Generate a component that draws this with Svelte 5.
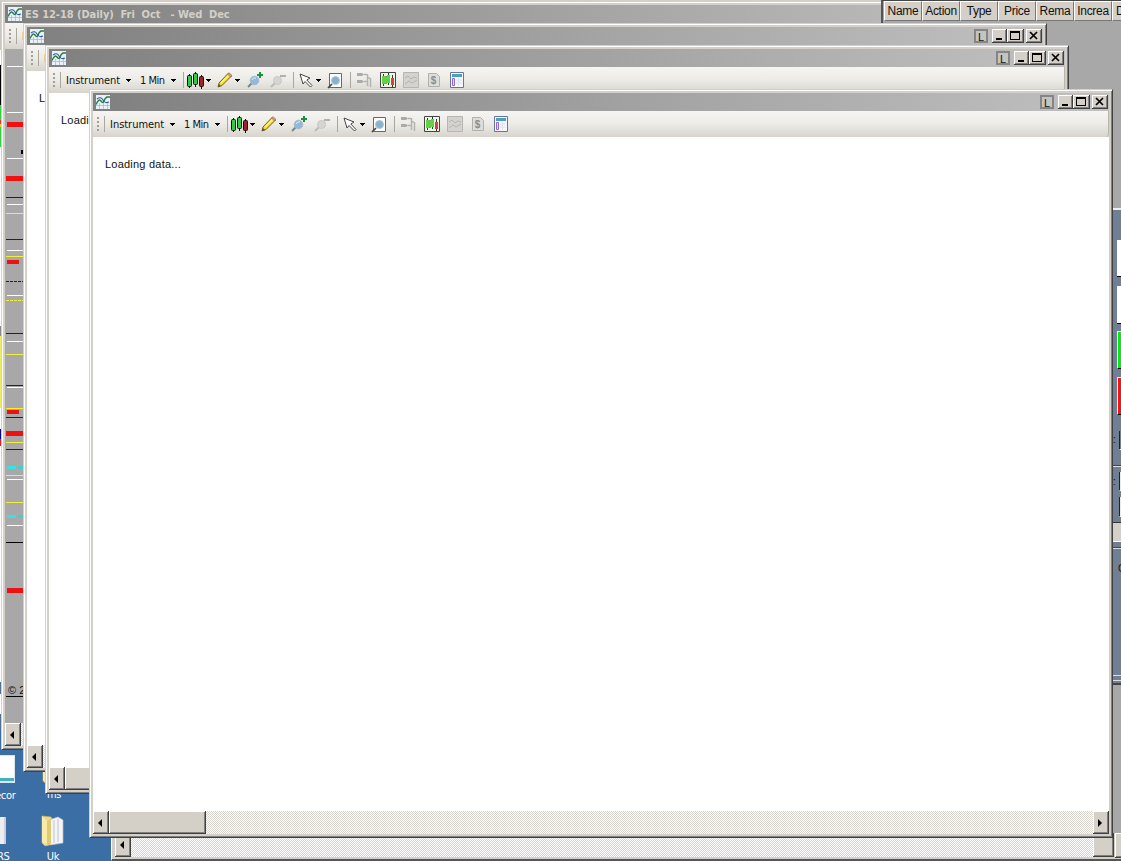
<script>
  const windows = [
    { id: 'daily', x: 1, y: 1, title: 'ES 12-18 (Daily)  Fri  Oct   - Wed  Dec', chart: true, thumb: false },
    { id: 'second', x: 23, y: 23, title: '', chart: false, thumb: false },
    { id: 'third', x: 45, y: 45, title: '', chart: false, thumb: true },
    { id: 'front', x: 89, y: 89, title: '', chart: false, thumb: true }
  ];

  const columns = ['Name', 'Action', 'Type', 'Price', 'Rema', 'Increa', 'D'];

  // price levels: [y, colour, height, left, width]
  const levels = [
    [66, 'white'], [112, 'white'], [122, 'red', 5, 2], [150, 'black', 4, 16, 3],
    [158, 'white'], [176, 'red', 5, 1], [197, 'blue'], [204, 'white'],
    [213, 'yellow'], [239, 'blue'], [250, 'white'], [256, 'yellow'],
    [260, 'red', 4, 2, 12], [281, 'blue dashed'], [295, 'white'], [300, 'yellow dashed'],
    [333, 'blue'], [341, 'white'], [354, 'yellow'], [385, 'blue'], [387, 'white'],
    [408, 'yellow'], [410, 'red', 4, 2, 12], [417, 'blue'], [431, 'red', 5, 1],
    [442, 'yellow'], [449, 'blue'], [466, 'cyan', 3, 2, 9], [466, 'teal', 3, 13, 5],
    [475, 'yellow'], [479, 'white'], [502, 'yellow'], [515, 'cyan', 3, 2, 9],
    [515, 'teal', 3, 13, 5], [525, 'white'], [542, 'black'], [588, 'red', 5, 2], [696, 'black']
  ];
</script>

{#snippet arrow()}
  <svg class="arrow" width="6" height="3" viewBox="0 0 6 3" shape-rendering="crispEdges"><path d="M0 0h5v1H0zM1 1h3v1H1zM2 2h1v1H2z" /></svg>
{/snippet}

{#snippet toolbar()}
  <div class="toolbar">
    <i class="grip"></i>
    <i class="sep first"></i>
    <span class="label instrument">Instrument</span>
    {@render arrow()}
    <span class="label interval">1 Min</span>
    {@render arrow()}
    <i class="sep after-interval"></i>
    <svg class="candles" width="17" height="17" viewBox="0 0 17 17" stroke="#111">
      <path d="M2.5 2v14M8.5 0v15M14.5 3v14" />
      <rect x=".5" y="3.5" width="4" height="11" rx="1" fill="#35c948" />
      <rect x="6.5" y="1.5" width="4" height="11" rx="1" fill="#35c948" />
      <rect x="12.5" y="4.5" width="4" height="10" rx="1" fill="#a32228" />
    </svg>
    {@render arrow()}
    <svg class="pencil" width="17" height="16" viewBox="0 0 17 16">
      <path d="M2 11 11 1.5 14.5 4 5 13.5 1 15z" fill="#f2d83d" stroke="#776018" />
      <path d="m4 11 8-8" stroke="#fff48a" stroke-width="1.3" />
      <path d="m10.5 2 1.2-1.3 3.2 2.5L13.5 5z" fill="#e39a76" stroke="#8a624a" stroke-width=".6" />
      <path d="m1 15 1-3 2 2z" fill="#555" />
    </svg>
    {@render arrow()}
    <svg class="zoom-in" width="17" height="16" viewBox="0 0 17 16">
      <path d="m5 11-4 4" stroke="#7b858c" stroke-width="2" />
      <circle cx="7.5" cy="8.5" r="4.3" fill="#90b9da" stroke="#a9bac5" />
      <path d="M5 8q1-3 4-2" fill="none" stroke="#d9edf8" />
      <path d="M13 0v6M10 3h6" stroke="#199044" stroke-width="2" />
    </svg>
    <svg class="zoom-out" width="17" height="16" viewBox="0 0 17 16">
      <path d="m5 11-4 4" stroke="#bbb" stroke-width="2" />
      <circle cx="7.5" cy="8.5" r="4" fill="#d6d5d2" stroke="#c6c6c3" />
      <path d="M10 4h6" stroke="#b0b0b0" stroke-width="2" />
    </svg>
    <i class="sep after-zoom"></i>
    <svg class="pointer" width="14" height="15" viewBox="0 0 14 15">
      <path d="m1 1 10 4-3.2 2L13 12.5 11.5 14 6 8.5 4 11z" fill="#fff" stroke="#444" />
    </svg>
    {@render arrow()}
    <svg class="page" width="16" height="17" viewBox="0 0 16 17">
      <path d="M2.5 1.5h12v14h-12z" fill="#fff" stroke="#667" />
      <circle cx="8.5" cy="8.5" r="4" fill="#86b2d0" stroke="#afc5d5" />
      <path d="m5 12-4 4" stroke="#444" stroke-width="1.7" />
    </svg>
    <i class="sep after-page"></i>
    <svg class="orders" width="16" height="16" viewBox="0 0 16 16">
      <path d="M1 1h5l2 1.5L6 4H1zM1 8h5l2 1.5L6 11H1z" fill="#aaa" />
      <path d="M8 2.5h3M8 9.5h3M11.5 2v12M11 6h3M14.5 6v9" fill="none" stroke="#b3b3b0" stroke-width="1.5" />
    </svg>
    <svg class="chart" width="16" height="16" viewBox="0 0 16 16">
      <path d="M.5.5h15v15H.5z" fill="#eef4e9" stroke="#444" />
      <path d="M3.5 2v12M8.5 1v12M12.5 3v12M6 4v8" stroke="#174a16" />
      <path d="M2 4h3v8H2zM5 5h2v6H5zM7 3h3v8H7z" fill="#62d144" />
      <path d="M11 6h3v7h-3z" fill="#dc3e3e" />
    </svg>
    <svg class="faded" width="16" height="16" viewBox="0 0 16 16">
      <path d="M.5.5h15v15H.5z" fill="#d4d3cf" stroke="#b5b5b2" />
      <path d="m2 6 3-2 3 3 3-2 3 1M2 12l4-3 3 2 5-3" fill="none" stroke="#b4b4b1" />
    </svg>
    <svg class="dollar" width="14" height="16" viewBox="0 0 14 16">
      <path d="M1.5 1.5h8l3 3v10h-11z" fill="#deddda" stroke="#b0b0ad" />
      <text x="3.8" y="12" font-size="10" font-weight="bold" fill="#8c8c8a">$</text>
    </svg>
    <svg class="panel" width="14" height="16" viewBox="0 0 14 16">
      <path d="M.5.5h13v15H.5z" fill="#f7f8ff" stroke="#6874a0" />
      <path d="M2 2h10v3H2z" fill="#4d9fc0" />
      <path d="M2.5 6.5h2v7h-2z" fill="#e5d5ff" stroke="#9067d4" />
      <path d="M6 8h6M6 11h6M8.5 6v8" stroke="#dde2f0" />
    </svg>
  </div>
{/snippet}

{#snippet folder()}
  <svg width="24" height="32" viewBox="0 0 24 32">
    <path d="m1 1 9 1 2 4v23l-8 2-3-3z" fill="#ecd989" stroke="#d0b761" stroke-width=".6" />
    <path d="m8 5 9-3 5 3v23l-13 2z" fill="#f4f5f7" stroke="#b9bdc7" stroke-width=".7" />
    <path d="m1 1 5 5v24l-5-3z" fill="#f9eaa8" />
    <path d="M13 5v23M17 4v23" stroke="#bdc4d3" />
    <path d="m6 6 4-2v25l-4 2z" fill="#dfc971" />
  </svg>
{/snippet}

<div class="desktop">
  <div class="edge-strip"></div>
  <div class="top-strip"></div>
  <div class="shortcut recorder"><i class="screen"></i><span>ecor</span></div>
  <div class="shortcut rs"><i class="doc"></i><span>RS</span></div>
  <div class="shortcut ms">{@render folder()}<span>ms</span></div>
  <div class="shortcut uk">{@render folder()}<span>Uk</span></div>

  <div class="workspace">
    <div class="side">
      <i class="field white-field"></i>
      <i class="field white-field second"></i>
      <i class="field buy"></i>
      <i class="field sell"></i>
      <span class="colon one">:</span>
      <i class="input a"></i>
      <i class="line b"></i>
      <span class="colon two">:</span>
      <i class="input c"></i>
      <i class="input d"></i>
      <i class="beige"></i>
      <i class="line e"></i>
      <span class="colon three">C</span>
      <i class="line f"></i>
    </div>
  </div>

  <div class="back-window">
    <div class="scrollbar">
      <i class="button left"></i>
      <i class="track"></i>
      <i class="button corner"></i>
    </div>
    <i class="button outer"></i>
  </div>

  {#each windows as win, i (win.id)}
    <section class="window" style="left: {win.x}px; top: {win.y}px; z-index: {i === 0 ? 1 : i + 2}">
      <header class="titlebar">
        <svg class="app-icon" width="14" height="14" viewBox="0 0 14 14">
          <path d="M0 0h14v14H0z" fill="#e9f0f8" />
          <path d="M0 10.5h14M3.5 8v6M7.5 8v6M11.5 6v8" stroke="#9fbce8" stroke-width=".8" />
          <path d="M0 9.5Q3 3 5 6t3 0 3-4h3" fill="none" stroke="#267b42" stroke-width="1.4" />
          <path d="M1 4q4-3 6 1t6 2" fill="none" stroke="#315c9f" stroke-width="1.1" />
        </svg>
        <span class="title">{win.title}</span>
        <div class="controls">
          <span class="link">L</span>
          <i class="control"><svg width="15" height="14"><path d="M4 9h6v2H4z" /></svg></i>
          <i class="control wide"><svg width="16" height="14" shape-rendering="crispEdges"><path d="M3 2h10v9H3zM4 4v6h8V4z" fill-rule="evenodd" /></svg></i>
          <i class="control close"><svg width="16" height="14"><path d="m4 3 7 7m0-7-7 7" stroke="#000" stroke-width="1.7" /></svg></i>
        </div>
      </header>
      {@render toolbar()}
      <main class="content" class:chart-area={win.chart}>
        {#if win.chart}
          {#each levels as [y, kind, height = 1, left = kind === 'white' ? 2 : 1, width = 18 - left]}
            <i class="level {kind}" style="top: {y - 49}px; height: {height}px; left: {left}px; width: {width}px"></i>
          {/each}
          <span class="copyright">© 2018</span>
        {:else}
          <p>Loading data...</p>
        {/if}
      </main>
      <div class="scrollbar">
        <i class="button left"></i>
        {#if win.thumb}<i class="button thumb"></i>{/if}
        <i class="track"></i>
        <i class="button right"></i>
      </div>
    </section>
  {/each}

  <div class="orders-grid">
    {#each columns as name}
      <span>{name}</span>
    {/each}
  </div>
</div>

<style>
  :global(body) {
    margin: 0;
    overflow: hidden;
  }

  .desktop {
    position: relative;
    width: 1121px;
    height: 861px;
    overflow: hidden;
    background: #3a6ea5;
    font: 11px "Liberation Sans", sans-serif;
    color: #111;
  }

  .desktop * {
    box-sizing: border-box;
  }

  svg {
    display: block;
    flex: none;
  }

  i {
    display: block;
    flex: none;
  }

  .edge-strip {
    position: absolute;
    left: 0;
    top: 0;
    width: 2px;
    height: 750px;
    background: linear-gradient(#c9c6bf 50px, #fff 50px 65px, #000 65px 105px, #35d043 105px 120px, #e33 120px 124px, #dfcc40 124px 127px, #35d043 127px 147px, #fff 147px 326px, #888 326px 336px, #eeee62 336px 408px, #fff 408px 429px, #009 429px 439px, #d22 439px 446px, #fff 446px 682px, #52708f 682px 694px, #fff 694px 714px, #52708f 714px 730px, #3a6ea5 730px);
  }

  .top-strip {
    position: absolute;
    left: 0;
    top: 0;
    width: 882px;
    height: 1px;
    background: #d4d0c8;
  }

  .workspace {
    position: absolute;
    left: 881px;
    top: 0;
    width: 240px;
    height: 861px;
    z-index: 2;
    background: #a8a8a8;
    border-left: 1px solid #777;
  }

  .side {
    position: absolute;
    right: 0;
    top: 208px;
    width: 8px;
    height: 477px;
    border-top: 2px solid #f0eeea;
    border-bottom: 2px solid #444;
    background: #6f8095;
    overflow: hidden;
  }

  .side i {
    position: absolute;
    right: 0;
    width: 4px;
  }

  .side .field { height: 37px; border-bottom: 1px solid #000; }
  .side .white-field { top: 30px; background: #fff; }
  .side .white-field.second { top: 76px; height: 38px; }
  .side .buy { top: 121px; height: 38px; background: #0e1; border-left: 1px solid #dfd; border-top: 1px solid #dfd; }
  .side .sell { top: 167px; height: 38px; background: #f11; border-left: 1px solid #fdd; border-top: 1px solid #fdd; }
  .side .input { width: 2px; border-left: 1px solid #222; border-bottom: 1px solid #fff; }
  .side .a { top: 221px; height: 19px; }
  .side .c { top: 262px; height: 19px; background: #e9e9e9; }
  .side .d { top: 287px; height: 20px; background: #e9e9e9; }
  .side .line { width: 8px; height: 2px; border-top: 1px solid #444; border-bottom: 1px solid #ddd; }
  .side .b { top: 255px; }
  .side .e { top: 337px; }
  .side .f { top: 465px; height: 6px; border-color: #ddd; }
  .side .beige { width: 8px; top: 312px; height: 20px; background: #d4d0c8; border-top: 1px solid #333; border-bottom: 1px solid #fff; }
  .colon { position: absolute; left: 0; font-size: 10px; }
  .colon.one { top: 224px; }
  .colon.two { top: 266px; }
  .colon.three { left: 5px; top: 353px; }

  .orders-grid {
    position: absolute;
    left: 881px;
    top: 0;
    z-index: 2;
    width: 240px;
    height: 23px;
    padding-left: 1px;
    display: flex;
    overflow: hidden;
    background: #a8a8a8;
    border-top: 1px solid #444;
    border-left: 2px solid #555;
    font-size: 12px;
  }

  .orders-grid span {
    flex: none;
    width: 38px;
    height: 20px;
    line-height: 19px;
    text-align: center;
    letter-spacing: -0.3px;
    white-space: nowrap;
    overflow: hidden;
    background: #d4d0c8;
    border: 1px solid #777;
    border-top-color: #fff;
    border-left-color: #fff;
  }

  .orders-grid span:last-child {
    padding-left: 3px;
    text-align: left;
  }

  .back-window {
    position: absolute;
    left: 111px;
    top: 833px;
    width: 1010px;
    height: 28px;
    z-index: 2;
    padding: 0 0 0 3px;
    display: flex;
    background: #d4d0c8;
    border-left: 1px solid #fff;
    border-bottom: 2px solid #555;
  }

  .back-window .scrollbar { width: 999px; height: 24px; }
  .back-window .corner { width: 21px; }
  .back-window .outer { width: 12px; margin-left: 1px; height: 25px; }

  .window {
    position: absolute;
    width: 1024px;
    height: 749px;
    padding: 3px;
    display: flex;
    flex-direction: column;
    background: #d4d0c8;
    border: 1px solid #d4d0c8;
    border-right-color: #404040;
    border-bottom-color: #404040;
    box-shadow: inset 1px 1px #fff, inset -1px -1px #808080;
  }

  .titlebar {
    flex: none;
    height: 18px;
    padding: 0 1px 0 3px;
    display: flex;
    align-items: center;
    background: linear-gradient(to right, #808080, #c0c0c0);
  }

  .title {
    margin-left: 3px;
    white-space: pre;
    color: #d4d0c8;
    font: bold 11px "DejaVu Sans Condensed", "DejaVu Sans", sans-serif;
    font-stretch: condensed;
    letter-spacing: -0.05px;
  }

  .controls {
    margin-left: auto;
    display: flex;
  }

  .link {
    width: 14px;
    height: 14px;
    margin-right: 4px;
    border: 2px solid #858585;
    background: #c6c4be;
    font-size: 11px;
    line-height: 13px;
    text-align: center;
  }

  .control {
    width: 15px;
    height: 14px;
    background: #d4d0c8;
    box-shadow: inset -1px -1px #404040, inset 1px 1px #fff, inset -2px -2px #808080;
  }

  .control.wide { width: 17px; }
  .control.close { width: 16px; margin-left: 2px; }

  .toolbar {
    flex: none;
    height: 26px;
    padding: 0 0 0 4px;
    display: flex;
    align-items: center;
    background: linear-gradient(#f6f5f2, #edebe6 50%, #d7d4cc);
    border-radius: 0 0 4px 4px;
    border-right: 1px solid #b8b5ad;
  }

  .grip {
    width: 2px;
    height: 14px;
    background: repeating-linear-gradient(#a39f98 0 2px, transparent 2px 4px);
  }

  .sep {
    width: 1px;
    height: 16px;
    background: #aaa79f;
  }

  .sep.first { margin-left: 5px; }
  .sep.after-interval { margin: 0 3px 0 6px; }
  .sep.after-zoom { margin: 0 5px 0 6px; }
  .sep.after-page { margin: 0 5px 0 7px; }

  .label {
    flex: none;
    white-space: nowrap;
    font: 11px "DejaVu Sans Condensed", "DejaVu Sans", sans-serif;
    font-stretch: condensed;
    letter-spacing: -0.03px;
  }

  .instrument { width: 60px; margin-left: 5px; }
  .interval { width: 30px; margin-left: 8px; letter-spacing: -0.5px; }
  .interval + .arrow { margin-left: 1px; }
  .candles + .arrow { margin-left: 2px; }
  .pencil { margin: 0 0 0 5px; }
  .pencil + .arrow { margin-left: 1px; }
  .zoom-in { margin-left: 6px; }
  .zoom-out { margin-left: 6px; }
  .pointer + .arrow { margin-left: 3px; }
  .page { margin-left: 5px; }
  .chart { margin-left: 8px; }
  .faded { margin-left: 7px; }
  .dollar { margin-left: 8px; }
  .panel { margin-left: 9px; }

  .content {
    position: relative;
    flex: 1;
    padding: 21px 12px;
    background: #fff;
    overflow: hidden;
  }

  .content p {
    margin: 0;
    font-size: 11px;
    line-height: 13px;
    letter-spacing: 0.22px;
  }

  .chart-area { background: #a8a8a8; }

  .level { position: absolute; }
  .level.white { background: #fff; }
  .level.red { background: #e11; }
  .level.blue { background: #1111b5; }
  .level.yellow { background: #f2f03c; }
  .level.black { background: #000; }
  .level.cyan { background: #31e5e5; }
  .level.teal { background: #45cccc; }
  .level.blue.dashed { background: repeating-linear-gradient(to right, #1111b5 0 3px, transparent 3px 4px); }
  .level.yellow.dashed { background: repeating-linear-gradient(to right, #f2f03c 0 3px, transparent 3px 4px); }

  .copyright {
    position: absolute;
    left: 3px;
    top: 635px;
    white-space: nowrap;
  }

  .scrollbar {
    flex: none;
    height: 23px;
    display: flex;
  }

  .track {
    flex: 1;
    background: repeating-conic-gradient(#d9d6cf 0 25%, #fff 0 50%) 0 0 / 2px 2px;
  }

  .button {
    width: 16px;
    background: #d4d0c8;
    box-shadow: inset -1px -1px #404040, inset 1px 1px #fff, inset -2px -2px #808080;
  }

  .button.left,
  .button.right {
    display: flex;
    align-items: center;
    justify-content: center;
  }

  .button.left::before,
  .button.right::before {
    content: "";
    margin-right: 2px;
    border: 4px solid transparent;
    border-left-width: 0;
    border-right: 4px solid #000;
  }

  .button.right::before { transform: scaleX(-1); }
  .button.thumb { width: 97px; }

  .shortcut {
    position: absolute;
    display: flex;
    flex-direction: column;
    align-items: center;
    color: #fff;
    font: 11px "DejaVu Sans Condensed", "DejaVu Sans", sans-serif;
    font-stretch: condensed;
    letter-spacing: -0.3px;
  }

  .recorder { left: 0; top: 755px; align-items: flex-start; }
  .rs { left: 0; top: 817px; align-items: flex-start; }
  .ms { left: 42px; top: 753px; }
  .uk { left: 41px; top: 815px; }
  .shortcut span { margin-top: 3px; }
  .recorder span { margin: 6px 0 0 -5px; }
  .rs span { margin: 6px 0 0 -3px; }

  .screen {
    width: 15px;
    height: 28px;
    background: linear-gradient(#fff 22px, #48aebc 22px 25px, #c5edf1 25px);
    border: 1px solid #d8e8ee;
    border-left: 0;
  }

  .doc {
    width: 6px;
    height: 27px;
    background: #eee;
    border-right: 2px solid #ccd;
  }
</style>
